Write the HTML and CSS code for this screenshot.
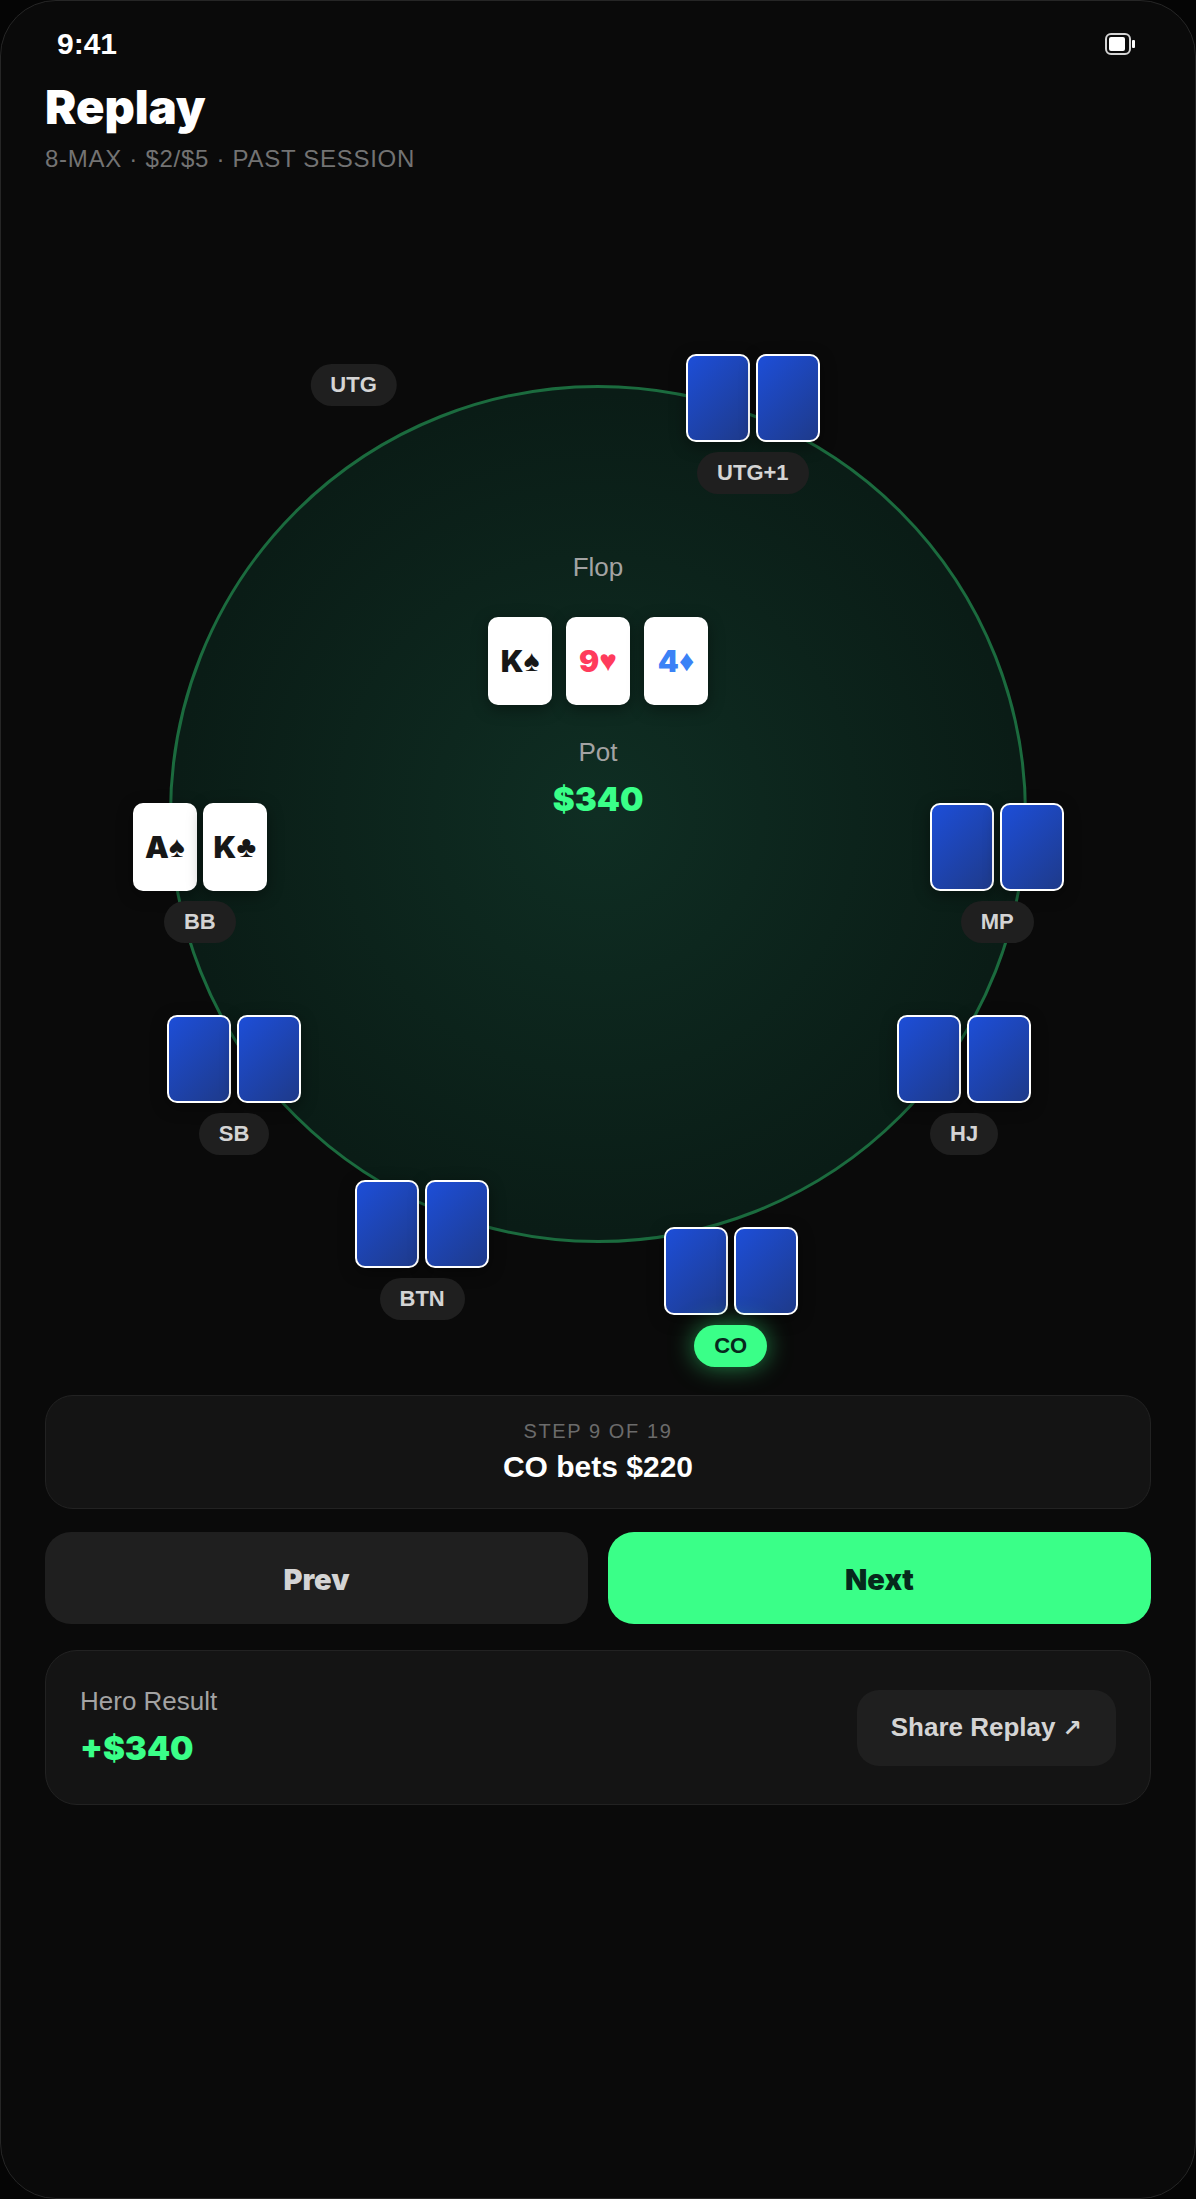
FILE: index.html
```html
<!DOCTYPE html>
<html lang="en">
<head>
    <meta charset="UTF-8">
    <meta name="viewport" content="width=device-width, initial-scale=1.0">
    <title>Replay</title>
    <link rel="stylesheet" href="styles.css">
</head>
<body>
    <div class="phone">
        <div class="status-bar">
            <span class="time">9:41</span>
            <svg class="battery" width="30" height="22" viewBox="0 0 30 22" aria-hidden="true">
                <rect x="1" y="1" width="24" height="20" rx="5" fill="none" stroke="#d4d4d4" stroke-width="2"/>
                <rect x="4" y="4" width="16" height="14" rx="2" fill="#fff"/>
                <rect x="27" y="7" width="3" height="8" rx="1" fill="#fff"/>
            </svg>
        </div>

        <header class="header">
            <h1>Replay</h1>
            <p class="subtitle">8-MAX · $2/$5 · PAST SESSION</p>
        </header>

        <section class="stage">
            <div class="felt">
                <div class="street">Flop</div>
                <div class="board">
                    <div class="card black">K<span class="suit">♠</span></div>
                    <div class="card red">9<span class="suit">♥</span></div>
                    <div class="card blue">4<span class="suit">♦</span></div>
                </div>
                <div class="pot-label">Pot</div>
                <div class="amount">$340</div>
            </div>

            <!-- Seats -->
            <div class="seat utg">
                <span class="pos">UTG</span>
            </div>
            <div class="seat utg1">
                <div class="hand"><div class="card back"></div><div class="card back"></div></div>
                <span class="pos">UTG+1</span>
            </div>
            <div class="seat mp">
                <div class="hand"><div class="card back"></div><div class="card back"></div></div>
                <span class="pos">MP</span>
            </div>
            <div class="seat hj">
                <div class="hand"><div class="card back"></div><div class="card back"></div></div>
                <span class="pos">HJ</span>
            </div>
            <div class="seat co">
                <div class="hand"><div class="card back"></div><div class="card back"></div></div>
                <span class="pos active">CO</span>
            </div>
            <div class="seat btn-seat">
                <div class="hand"><div class="card back"></div><div class="card back"></div></div>
                <span class="pos">BTN</span>
            </div>
            <div class="seat sb">
                <div class="hand"><div class="card back"></div><div class="card back"></div></div>
                <span class="pos">SB</span>
            </div>
            <div class="seat bb">
                <div class="hand">
                    <div class="card black">A<span class="suit">♠</span></div>
                    <div class="card black">K<span class="suit">♣</span></div>
                </div>
                <span class="pos">BB</span>
            </div>
        </section>

        <section class="step">
            <div class="step-count">STEP 9 OF 19</div>
            <div class="step-action">CO bets $220</div>
        </section>

        <div class="controls">
            <button type="button" class="btn">Prev</button>
            <button type="button" class="btn next">Next</button>
        </div>

        <section class="result">
            <div>
                <div class="result-label">Hero Result</div>
                <div class="amount">+$340</div>
            </div>
            <button type="button" class="share">Share Replay <span class="arrow">↗</span></button>
        </section>
    </div>
</body>
</html>
```
FILE: styles.css
```css
* {
    box-sizing: border-box;
}
body {
    margin: 0;
    background: #050505;
    color: #fff;
    font-family: "Liberation Sans", Arial, "DejaVu Sans", sans-serif;
}
.phone {
    min-height: 100vh;
    padding: 24px 44px;
    background: #0a0a0a;
    border: 1px solid #262626;
    border-radius: 56px;
}

/* Top */
.status-bar {
    display: flex;
    justify-content: space-between;
    align-items: center;
    padding: 0 16px 0 12px;
    height: 38px;
}
.time {
    font-size: 30px;
    font-weight: bold;
}
.header {
    padding-top: 18px;
}
h1 {
    margin: 0;
    font-family: Inter, "Arial Black", sans-serif;
    font-size: 47px;
    font-weight: 900;
    line-height: 52px;
}
.subtitle {
    margin: 12px 0 0;
    color: #737373;
    font-size: 24px;
    line-height: 28px;
    letter-spacing: 0.03em;
}

/* Table */
.stage {
    position: relative;
    display: flex;
    justify-content: center;
    align-items: center;
    aspect-ratio: 1;
    margin: 88px 0 28px;
}
.felt {
    display: flex;
    flex-direction: column;
    align-items: center;
    width: 77.6%;
    aspect-ratio: 1;
    padding-top: 163px;
    border: 3px solid #1b6b3e;
    border-radius: 50%;
    background: radial-gradient(circle, #0f2e23 0%, #0a1c16 70%);
}
.street,
.pot-label,
.result-label {
    color: #a3a3a3;
    font-size: 26px;
    line-height: 32px;
}
.board {
    display: flex;
    gap: 14px;
    margin: 34px 0 31px;
}
.amount {
    margin-top: 9px;
    color: #3aff88;
    font-family: Inter, "Arial Black", sans-serif;
    font-size: 33px;
    font-weight: 900;
    line-height: 44px;
}
.card {
    display: flex;
    justify-content: center;
    align-items: center;
    width: 64px;
    height: 88px;
    border-radius: 10px;
    background: #fff;
    box-shadow: 0 4px 16px rgba(0, 0, 0, 0.4);
    font-family: Inter, "Arial Black", sans-serif;
    font-size: 30px;
    font-weight: 900;
}
.suit {
    font-family: "Liberation Sans", Arial, sans-serif;
    font-weight: normal;
}
.black {
    color: #171717;
}
.red {
    color: #ff3b5c;
}
.blue {
    color: #3b82f6;
}
.back {
    border: 2px solid #fff;
    background: linear-gradient(135deg, #1d4ed8, #1e3a8a);
}
.seat {
    position: absolute;
    display: flex;
    flex-direction: column;
    align-items: center;
    gap: 10px;
    transform: translate(-50%, -50%);
}
.hand {
    display: flex;
    gap: 6px;
}
.pos {
    padding: 0 20px;
    border-radius: 21px;
    background: #1f1f1f;
    color: #d4d4d4;
    font-size: 22px;
    font-weight: bold;
    line-height: 42px;
}
.pos.active {
    background: #3aff88;
    color: #06281c;
    box-shadow: 0 0 24px rgba(58, 255, 136, 0.5);
}
.utg { left: 27.9%; top: 11.2%; }
.utg1 { left: 64%; top: 14.7%; }
.mp { left: 86.1%; top: 55.3%; }
.hj { left: 83.1%; top: 74.5%; }
.co { left: 62%; top: 93.7%; }
.btn-seat { left: 34.1%; top: 89.4%; }
.sb { left: 17.1%; top: 74.5%; }
.bb { left: 14%; top: 55.3%; }

/* Step panel */
.step {
    padding: 21px 22px 23px;
    border: 1px solid #222;
    border-radius: 28px;
    background: #141414;
    text-align: center;
}
.step-count {
    color: #6b6b6b;
    font-size: 20px;
    line-height: 28px;
    letter-spacing: 0.08em;
}
.step-action {
    margin-top: 4px;
    font-size: 30px;
    font-weight: bold;
    line-height: 36px;
}
.controls {
    display: flex;
    gap: 20px;
    margin: 23px 0 26px;
}
button {
    border: none;
    background: #1f1f1f;
    color: #d4d4d4;
    cursor: pointer;
}
.btn {
    flex: 1;
    height: 92px;
    padding-top: 4px;
    border-radius: 26px;
    font-family: Inter, "Arial Black", sans-serif;
    font-size: 29px;
    font-weight: 900;
}
.btn.next {
    background: #3aff88;
    color: #06281c;
}

/* Result */
.result {
    display: flex;
    justify-content: space-between;
    align-items: center;
    padding: 34px;
    border: 1px solid #222;
    border-radius: 32px;
    background: #141414;
}
.share {
    padding: 22px 34px;
    border-radius: 22px;
    font-family: "Liberation Sans", Arial, "DejaVu Sans", sans-serif;
    font-size: 26px;
    font-weight: bold;
    line-height: 31px;
}
.arrow {
    font-size: 23px;
}
```
